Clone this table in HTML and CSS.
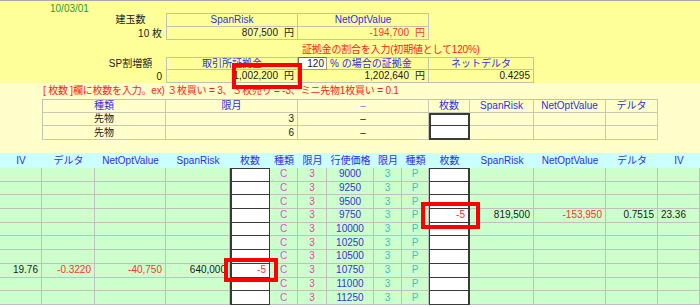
FILE: index.html
```html
<!DOCTYPE html>
<html lang="ja">
<head>
<meta charset="utf-8">
<title>Option sheet</title>
<link rel="stylesheet" href="styles.css">
</head>
<body>
<div class="sheet">
  <section class="top">
    <div class="row h12">
      <div class="cell date">10/03/01</div>
    </div>
    <div class="row h14">
      <div class="cell s2"></div>
      <div class="cell c">建玉数</div>
      <div class="cell s3 bx bt bl c blue">SpanRisk</div>
      <div class="cell s4 bx bt c blue">NetOptValue</div>
    </div>
    <div class="row h13">
      <div class="cell s3 r4">10 枚</div>
      <div class="cell s3 bx bl r">807,500<span class="yen">円</span></div>
      <div class="cell s4 bx r neg">-194,700<span class="yen">円</span></div>
    </div>
    <div class="row h17">
      <div class="cell s6"></div>
      <div class="cell s9 hint">証拠金の割合を入力(初期値として120%)</div>
    </div>
    <div class="row h13">
      <div class="cell s2"></div>
      <div class="cell c">SP割増額</div>
      <div class="cell s3 bx bt bl c blue">取引所証拠金</div>
      <div class="cell pct">120</div>
      <div class="cell s3 bx bt blue pl">% の場合の証拠金</div>
      <div class="cell s2 bx bt c blue">ネットデルタ</div>
    </div>
    <div class="row h13">
      <div class="cell s3 r4">0</div>
      <div class="cell s3 bx bl r">1,002,200<span class="yen">円</span></div>
      <div class="cell s4 bx r">1,202,640<span class="yen">円</span></div>
      <div class="cell s2 bx r">0.4295</div>
    </div>
  </section>

  <section class="mid">
    <div class="row h16">
      <div class="cell"></div>
      <div class="cell s14 note">[ 枚数 ]欄に枚数を入力。ex) ３枚買い = 3、３枚売り = -3、ミニ先物1枚買い = 0.1</div>
    </div>
    <div class="row h14">
      <div class="cell"></div>
      <div class="cell s2 tb bt bl c blue">種類</div>
      <div class="cell s3 tb bt c blue">限月</div>
      <div class="cell s4 tb bt c dash">–</div>
      <div class="cell tb bt c blue">枚数</div>
      <div class="cell tb bt c blue">SpanRisk</div>
      <div class="cell tb bt c blue">NetOptValue</div>
      <div class="cell tb bt c blue">デルタ</div>
    </div>
    <div class="row h13">
      <div class="cell"></div>
      <div class="cell s2 tb bl c">先物</div>
      <div class="cell s3 tb r">3</div>
      <div class="cell s4 tb c">–</div>
      <div class="cell inp first"></div>
      <div class="cell tb"></div>
      <div class="cell tb"></div>
      <div class="cell tb"></div>
    </div>
    <div class="row h14">
      <div class="cell"></div>
      <div class="cell s2 tb bl c">先物</div>
      <div class="cell s3 tb r">6</div>
      <div class="cell s4 tb c">–</div>
      <div class="cell inp"></div>
      <div class="cell tb"></div>
      <div class="cell tb"></div>
      <div class="cell tb"></div>
    </div>
    <div class="row h13"></div>
  </section>

  <section class="grid">
    <div class="row head">
      <div class="cell c">IV</div>
      <div class="cell c">デルタ</div>
      <div class="cell c">NetOptValue</div>
      <div class="cell c">SpanRisk</div>
      <div class="cell c">枚数</div>
      <div class="cell c">種類</div>
      <div class="cell c">限月</div>
      <div class="cell c">行使価格</div>
      <div class="cell c">限月</div>
      <div class="cell c">種類</div>
      <div class="cell c">枚数</div>
      <div class="cell c">SpanRisk</div>
      <div class="cell c">NetOptValue</div>
      <div class="cell c">デルタ</div>
      <div class="cell c">IV</div>
    </div>

    <div class="row data first">
      <div class="cell g"></div><div class="cell g"></div><div class="cell g"></div><div class="cell g"></div>
      <div class="cell w wl"></div>
      <div class="cell g c call">C</div><div class="cell g c callm">3</div><div class="cell g c strike">9000</div><div class="cell g c put">3</div><div class="cell g c put">P</div>
      <div class="cell w wr"></div>
      <div class="cell g"></div><div class="cell g"></div><div class="cell g"></div><div class="cell g"></div>
    </div>
    <div class="row data">
      <div class="cell g"></div><div class="cell g"></div><div class="cell g"></div><div class="cell g"></div>
      <div class="cell w wl"></div>
      <div class="cell g c call">C</div><div class="cell g c callm">3</div><div class="cell g c strike">9250</div><div class="cell g c put">3</div><div class="cell g c put">P</div>
      <div class="cell w wr"></div>
      <div class="cell g"></div><div class="cell g"></div><div class="cell g"></div><div class="cell g"></div>
    </div>
    <div class="row data">
      <div class="cell g"></div><div class="cell g"></div><div class="cell g"></div><div class="cell g"></div>
      <div class="cell w wl"></div>
      <div class="cell g c call">C</div><div class="cell g c callm">3</div><div class="cell g c strike">9500</div><div class="cell g c put">3</div><div class="cell g c put">P</div>
      <div class="cell w wr"></div>
      <div class="cell g"></div><div class="cell g"></div><div class="cell g"></div><div class="cell g"></div>
    </div>
    <div class="row data">
      <div class="cell g"></div><div class="cell g"></div><div class="cell g"></div><div class="cell g"></div>
      <div class="cell w wl"></div>
      <div class="cell g c call">C</div><div class="cell g c callm">3</div><div class="cell g c strike">9750</div><div class="cell g c put">3</div><div class="cell g c put">P</div>
      <div class="cell w wr r neg">-5</div>
      <div class="cell g r">819,500</div><div class="cell g r neg">-153,950</div><div class="cell g r">0.7515</div><div class="cell g r iv">23.36</div>
    </div>
    <div class="row data">
      <div class="cell g"></div><div class="cell g"></div><div class="cell g"></div><div class="cell g"></div>
      <div class="cell w wl"></div>
      <div class="cell g c call">C</div><div class="cell g c callm">3</div><div class="cell g c strike">10000</div><div class="cell g c put">3</div><div class="cell g c put">P</div>
      <div class="cell w wr"></div>
      <div class="cell g"></div><div class="cell g"></div><div class="cell g"></div><div class="cell g"></div>
    </div>
    <div class="row data">
      <div class="cell g"></div><div class="cell g"></div><div class="cell g"></div><div class="cell g"></div>
      <div class="cell w wl"></div>
      <div class="cell g c call">C</div><div class="cell g c callm">3</div><div class="cell g c strike">10250</div><div class="cell g c put">3</div><div class="cell g c put">P</div>
      <div class="cell w wr"></div>
      <div class="cell g"></div><div class="cell g"></div><div class="cell g"></div><div class="cell g"></div>
    </div>
    <div class="row data">
      <div class="cell g"></div><div class="cell g"></div><div class="cell g"></div><div class="cell g"></div>
      <div class="cell w wl"></div>
      <div class="cell g c call">C</div><div class="cell g c callm">3</div><div class="cell g c strike">10500</div><div class="cell g c put">3</div><div class="cell g c put">P</div>
      <div class="cell w wr"></div>
      <div class="cell g"></div><div class="cell g"></div><div class="cell g"></div><div class="cell g"></div>
    </div>
    <div class="row data">
      <div class="cell g r">19.76</div><div class="cell g r neg">-0.3220</div><div class="cell g r neg">-40,750</div><div class="cell g r">640,000</div>
      <div class="cell w wl r neg">-5</div>
      <div class="cell g c call">C</div><div class="cell g c callm">3</div><div class="cell g c strike">10750</div><div class="cell g c put">3</div><div class="cell g c put">P</div>
      <div class="cell w wr"></div>
      <div class="cell g"></div><div class="cell g"></div><div class="cell g"></div><div class="cell g"></div>
    </div>
    <div class="row data">
      <div class="cell g"></div><div class="cell g"></div><div class="cell g"></div><div class="cell g"></div>
      <div class="cell w wl"></div>
      <div class="cell g c call">C</div><div class="cell g c callm">3</div><div class="cell g c strike">11000</div><div class="cell g c put">3</div><div class="cell g c put">P</div>
      <div class="cell w wr"></div>
      <div class="cell g"></div><div class="cell g"></div><div class="cell g"></div><div class="cell g"></div>
    </div>
    <div class="row data">
      <div class="cell g"></div><div class="cell g"></div><div class="cell g"></div><div class="cell g"></div>
      <div class="cell w wl"></div>
      <div class="cell g c call">C</div><div class="cell g c callm">3</div><div class="cell g c strike">11250</div><div class="cell g c put">3</div><div class="cell g c put">P</div>
      <div class="cell w wr"></div>
      <div class="cell g"></div><div class="cell g"></div><div class="cell g"></div><div class="cell g"></div>
    </div>
  </section>

  <div class="mark m1"></div>
  <div class="mark m2"></div>
  <div class="mark m3"></div>
</div>
</body>
</html>
```

FILE: styles.css
```css
* { box-sizing: border-box; margin: 0; padding: 0; }
html, body { width: 700px; height: 307px; overflow: hidden; background: #ffffff; }
body {
  font-family: "Liberation Sans", "Noto Sans CJK JP", sans-serif;
  font-size: 10px;
  line-height: 1;
  color: #1a1a1a;
}
.sheet { position: relative; width: 700px; height: 307px; overflow: hidden; }

.row {
  display: grid;
  grid-template-columns: 42px 53px 71px 64px 40px 28px 29px 47px 28px 27px 41px 64px 72px 52px 42px;
}
.h12 { height: 12px; }
.h13 { height: 13px; }
.h14 { height: 14px; }
.h16 { height: 16px; }
.h17 { height: 17px; }

.cell { display: flex; align-items: center; white-space: nowrap; overflow: hidden; min-width: 0; }
.s2 { grid-column: span 2; }
.s3 { grid-column: span 3; }
.s4 { grid-column: span 4; }
.s6 { grid-column: span 6; }
.s9 { grid-column: span 9; }
.s14 { grid-column: span 14; }

.c { justify-content: center; }
.r { justify-content: flex-end; padding-right: 3px; }
.r4 { justify-content: flex-end; padding-right: 4px; }
.pl { padding-left: 3px; }

.blue { color: #2e2ee6; }
.neg { color: #ff3030; }
.yen { margin-left: 6px; }

/* top (yellow) */
.top { background: #ffff99; border-top: 1px solid #a8a8a8; }
.date { grid-column: span 4; padding-left: 50px; padding-top: 3px; color: #2f9a2f; }
.bx { border-right: 1px solid #c2c2b0; border-bottom: 1px solid #c2c2b0; }
.bt { border-top: 1px solid #c2c2b0; }
.bl { border-left: 1px solid #c2c2b0; }
.hint { color: #ff1a1a; padding-left: 4px; padding-top: 2px; letter-spacing: -0.2px; }
.pct {
  background: #ffffff;
  border: 1px solid #6a6a6a;
  border-right-color: #9a9a9a;
  border-bottom-color: #9a9a9a;
  justify-content: flex-end;
  padding-right: 2px;
}

/* middle (light yellow) */
.mid { background: #ffffcc; }
.note { color: #ff1a1a; padding-left: 1px; letter-spacing: -0.2px; }
.tb { border-right: 1px solid #c8c8b8; border-bottom: 1px solid #c8c8b8; }
.dash { color: #7a7af0; }
.inp {
  background: #ffffff;
  border-left: 2px solid #3a3a3a;
  border-right: 2px solid #3a3a3a;
  border-bottom: 2px solid #3a3a3a;
}
.inp.first { border-top: 2px solid #3a3a3a; border-bottom: 1px solid #3a3a3a; }

/* bottom grid */
.grid { background: #ccffcc; }
.head { height: 15px; background: #ccffff; }
.head .cell { color: #2e2ee6; }
.data { height: 13.7px; }
.g { background: #ccffcc; border-right: 1px solid #c0c0c0; border-bottom: 1px solid #c0c0c0; }
.w { background: #ffffff; border-bottom: 1px solid #3a3a3a; }
.wl { border-left: 2px solid #3a3a3a; border-right: 1px solid #3a3a3a; }
.wr { border-left: 1px solid #3a3a3a; border-right: 2px solid #3a3a3a; }
.data.first .w { border-top: 1px solid #3a3a3a; }
.call { color: #dd4fdd; }
.callm { color: #ee3fa8; }
.strike { color: #3434d4; }
.put { color: #33c4c4; }
.iv { padding-right: 13px; }

/* red annotation frames */
.mark { position: absolute; border: 4px solid #ff0000; }
.m1 { left: 232px; top: 63px; width: 70px; height: 26px; }
.m2 { left: 421px; top: 202px; width: 59px; height: 27px; }
.m3 { left: 224px; top: 258px; width: 54px; height: 24px; }
```
